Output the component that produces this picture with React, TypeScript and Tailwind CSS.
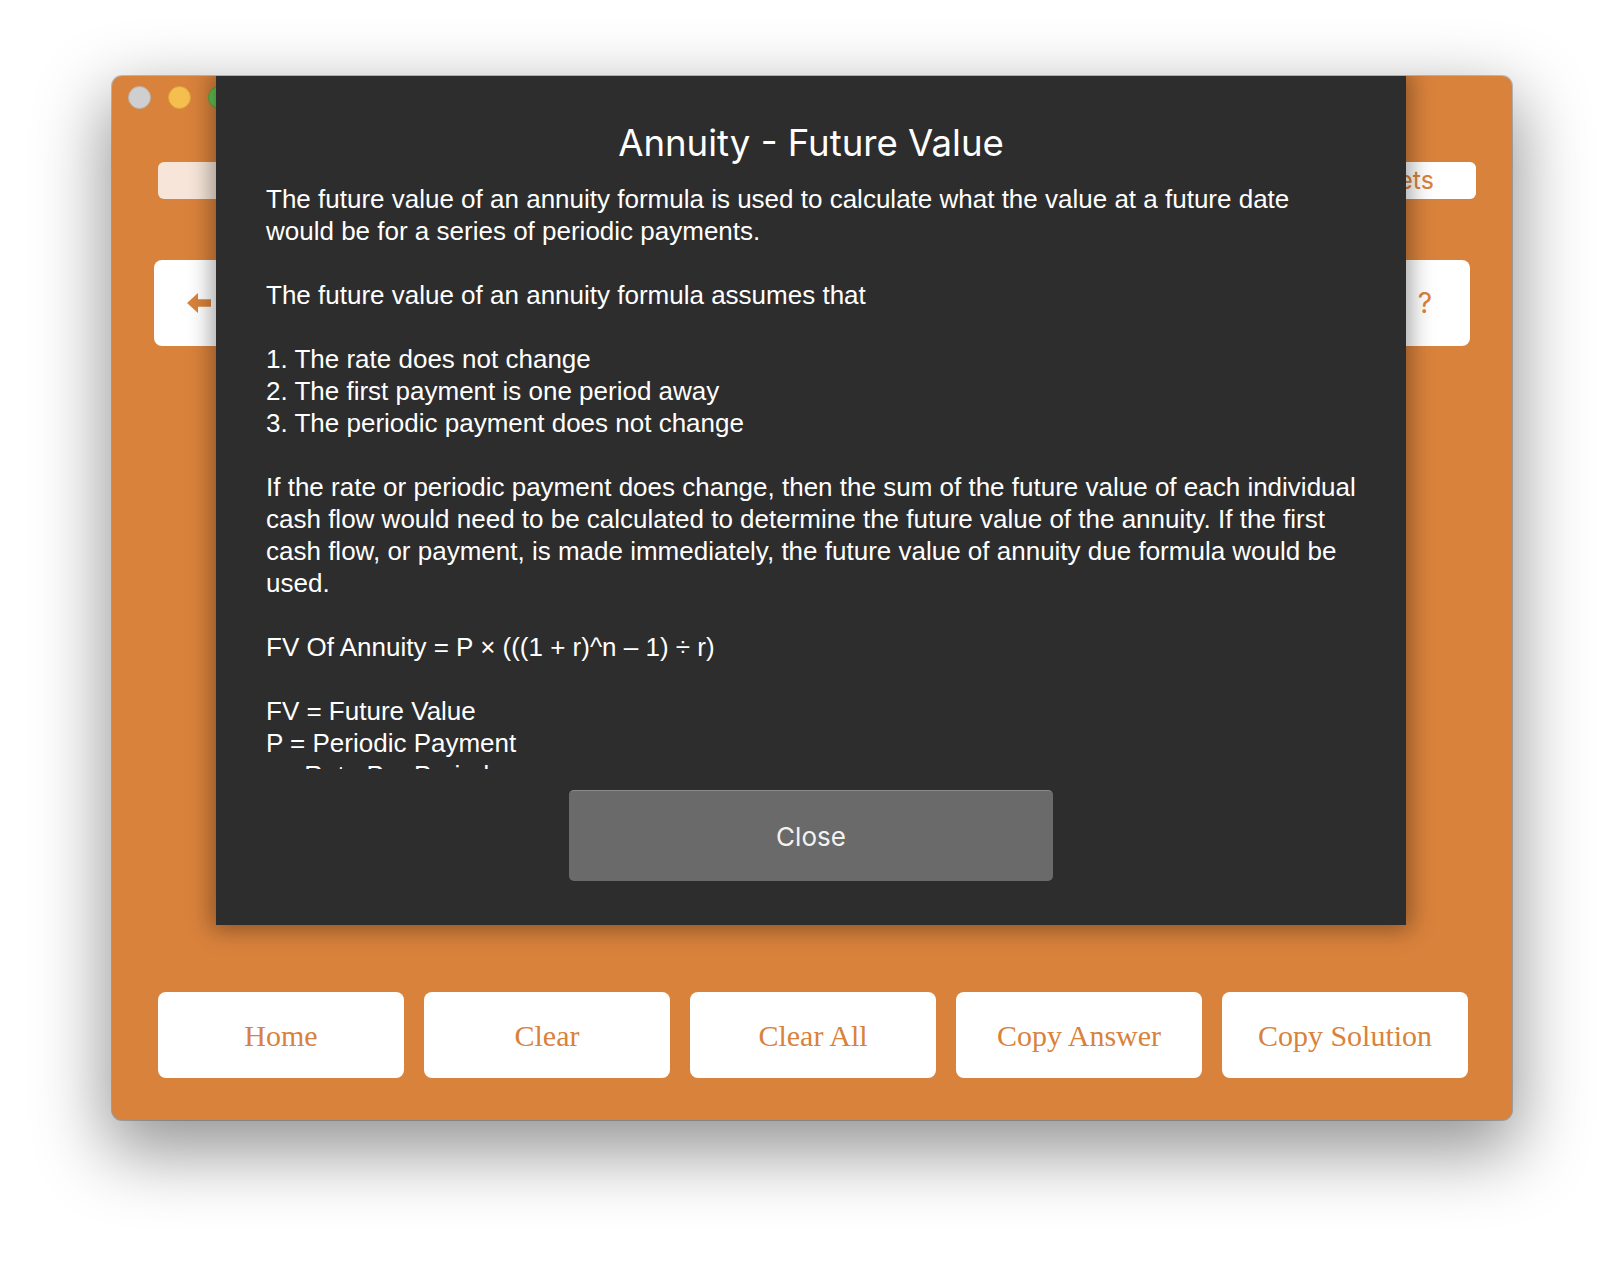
import React from "react";

const lines = [
  "The future value of an annuity formula is used to calculate what the value at a future date",
  "would be for a series of periodic payments.",
  "",
  "The future value of an annuity formula assumes that",
  "",
  "1. The rate does not change",
  "2. The first payment is one period away",
  "3. The periodic payment does not change",
  "",
  "If the rate or periodic payment does change, then the sum of the future value of each individual",
  "cash flow would need to be calculated to determine the future value of the annuity. If the first",
  "cash flow, or payment, is made immediately, the future value of annuity due formula would be",
  "used.",
  "",
  "FV Of Annuity = P \u00d7 (((1 + r)^n \u2013 1) \u00f7 r)",
  "",
  "FV = Future Value",
  "P = Periodic Payment",
  "r = Rate Per Period",
  "n = Number of Periods",
];

const bottomButtons = ["Home", "Clear", "Clear All", "Copy Answer", "Copy Solution"];

function TrafficLights() {
  return (
    <div className="flex gap-[17px] pl-[16px] pt-[10px]">
      <div className="h-[23px] w-[23px] rounded-full border border-[#b4b4b4] bg-[#cfcfcf]" />
      <div className="h-[23px] w-[23px] rounded-full border border-[#dda13a] bg-[#f5bf4f]" />
      <div className="h-[23px] w-[23px] rounded-full border border-[#4ea83f] bg-[#61c554]" />
    </div>
  );
}

function ArrowIcon() {
  return (
    <svg width="24" height="20" viewBox="0 0 24 20">
      <polygon points="0,10 11,0 11,6.3 24,6.3 24,13.7 11,13.7 11,20" fill="#d9823c" />
    </svg>
  );
}

export default function App() {
  return (
    <div className="relative h-[1268px] w-[1624px] overflow-hidden bg-white pl-[112px] pt-[76px]">
      <div className="relative h-[1044px] w-[1400px] overflow-hidden rounded-[10px] bg-[#d9823c] shadow-[0_0_0_1px_rgba(0,0,0,0.22),0_26px_70px_6px_rgba(0,0,0,0.42)]">
        <div className="flex h-full flex-col">
          <TrafficLights />
          {/* segmented bar */}
          <div className="ml-[46px] mr-[36px] mt-[53px] flex h-[37px] overflow-hidden rounded-[6px]">
            <div className="flex-1 bg-[#f6e5d8]" />
            <div className="flex w-[320px] items-center justify-end bg-white pr-[42px] font-['Inter',sans-serif] text-[25px] text-[#d9823c]">
              Presets
            </div>
          </div>
          {/* second row */}
          <div className="mx-[42px] mt-[61px] flex h-[86px] justify-between">
            <div className="flex w-[90px] items-center justify-center rounded-[8px] bg-white">
              <ArrowIcon />
            </div>
            <div className="flex w-[90px] items-center justify-center rounded-[8px] bg-white font-['Inter',sans-serif] text-[28px] text-[#d9823c]">
              ?
            </div>
          </div>
          <div className="flex-1" />
          {/* bottom buttons */}
          <div className="mb-[42px] ml-[46px] mr-[44px] flex h-[86px] gap-[20px]">
            {bottomButtons.map((b) => (
              <div
                key={b}
                className="flex flex-1 items-center justify-center rounded-[8px] bg-white font-['Liberation_Serif',serif] text-[30px] text-[#d9823c]"
              >
                {b}
              </div>
            ))}
          </div>
        </div>

        {/* modal sheet */}
        <div className="absolute left-[104px] top-0 flex h-[849px] w-[1190px] flex-col bg-[#2d2d2d] shadow-[0_0_22px_4px_rgba(0,0,0,0.38)]">
          <div className="pt-[43px] text-center font-['Inter',sans-serif] text-[36.6px] leading-[48px] text-white">
            Annuity - Future Value
          </div>
          <div className="mt-[16px] h-[586px] overflow-hidden px-[50px] font-['Liberation_Sans',Arial,sans-serif] text-[26px] leading-[32px] text-white">
            {lines.map((l, i) => (
              <div key={i} className="h-[32px] whitespace-pre">
                {l}
              </div>
            ))}
          </div>
          <div className="mt-[21px] flex justify-center">
            <div className="flex h-[91px] w-[484px] items-center justify-center rounded-[5px] border-t border-[#8a8a8a] bg-[#6a6a6a] font-['Inter',sans-serif] text-[26px] text-[#f2f2f2]">
              Close
            </div>
          </div>
        </div>
      </div>
    </div>
  );
}
